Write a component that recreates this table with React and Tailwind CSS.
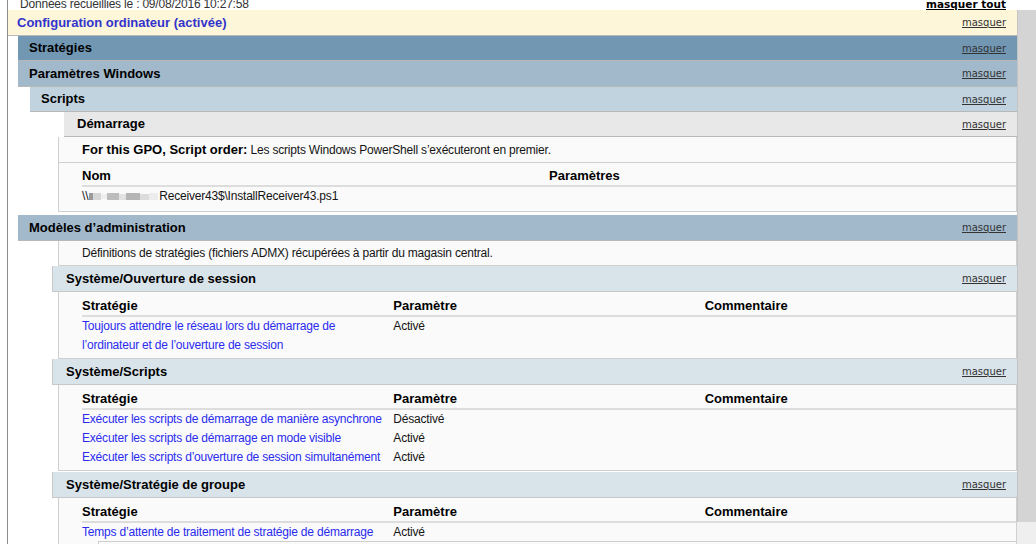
import React from "react";

const body = "text-[12px] tracking-[-0.2px] text-[#141414]";
const link = "text-[#2b2bef]";

function Masquer() {
  return (
    <span className="font-['DejaVu_Sans',Verdana,sans-serif] text-[10px] tracking-normal text-[#333] underline underline-offset-[1px]">
      masquer
    </span>
  );
}

function Head({ className, label, labelClass = "text-black" }) {
  return (
    <div className={`flex items-center justify-between border-b border-[#b8b8b8] pr-[11px] ${className}`}>
      <span className={`text-[13px] font-bold ${labelClass}`}>{label}</span>
      <Masquer />
    </div>
  );
}

function Box({ className, children }) {
  return (
    <div className={`ml-[50px] border-x border-b border-[#d0d0d0] bg-[#fafafa] pl-[23px] ${className}`}>
      {children}
    </div>
  );
}

function PolicyTable({ rows, className = "" }) {
  return (
    <Box className={`pt-[5px] pb-[3px] ${className}`}>
      <div className="grid h-[20px] grid-cols-3 border-b-2 border-[#dddddd] text-[13px] font-bold leading-[18px]">
        <span>Stratégie</span>
        <span>Paramètre</span>
        <span>Commentaire</span>
      </div>
      {rows.map((r, i) => (
        <div key={i} className={`grid grid-cols-3 leading-[19px] ${body}`}>
          <span className={link}>
            {r.name.map((l, j) => (
              <span key={j} className="block whitespace-nowrap">
                {l}
              </span>
            ))}
          </span>
          <span>{r.value}</span>
          <span></span>
        </div>
      ))}
    </Box>
  );
}

function Blur() {
  return (
    <span className="mx-[1px] inline-flex h-[8px] items-center align-middle">
      <span className="h-[7px] w-[4px] bg-[#9a9a9a]" />
      <span className="h-[7px] w-[8px] bg-[#d6d6d6]" />
      <span className="h-[5px] w-[6px] bg-[#eeeeee]" />
      <span className="h-[7px] w-[12px] bg-[#bdbdbd]" />
      <span className="h-[6px] w-[7px] bg-[#e2e2e2]" />
      <span className="h-[7px] w-[14px] bg-[#b5b5b5]" />
      <span className="h-[6px] w-[9px] bg-[#dcdcdc]" />
      <span className="h-[7px] w-[9px] bg-[#ececec]" />
    </span>
  );
}

export default function App() {
  return (
    <div className="flex h-[544px] w-[1036px] overflow-hidden bg-white font-['Liberation_Sans',Arial,sans-serif]">
      <div className="w-[7px] shrink-0" />
      <div className="w-[1010px] shrink-0 border-l border-[#8c8c8c]">
        <div className="flex h-[10px] items-start justify-between pl-[12px] pr-[11px]">
          <span className="-mt-[3px] text-[12px] leading-[14px] tracking-[-0.2px] text-[#333]">
            Données recueillies le : 09/08/2016 10:27:58
          </span>
          <span className="-mt-[3px] font-['DejaVu_Sans',Verdana,sans-serif] text-[10.5px] font-bold leading-[14px] text-black underline">
            masquer tout
          </span>
        </div>

        <Head
          className="h-[26px] bg-[#fdf6d9] pl-[9px]"
          label="Configuration ordinateur (activée)"
          labelClass="text-[#3333cc]"
        />
        <Head className="ml-[10px] h-[25px] bg-[#7197b3] pl-[11px]" label="Stratégies" />
        <Head className="ml-[10px] h-[26px] bg-[#a2b9cb] pl-[11px]" label="Paramètres Windows" />
        <Head className="ml-[22px] h-[25px] bg-[#c1d3df] pl-[11px]" label="Scripts" />
        <Head className="ml-[56px] h-[25px] bg-[#e8e8e8] pl-[13px]" label="Démarrage" />

        <Box className="flex h-[26px] items-center">
          <span className={body}>
            <b className="text-[13px] tracking-normal text-black">For this GPO, Script order:</b> Les scripts Windows PowerShell
            s’exécuteront en premier.
          </span>
        </Box>
        <Box className="pt-[4px] pb-[5px]">
          <div className="grid h-[20px] grid-cols-2 border-b-2 border-[#dddddd] text-[13px] font-bold leading-[18px]">
            <span>Nom</span>
            <span>Paramètres</span>
          </div>
          <div className={`grid grid-cols-2 leading-[19px] ${body}`}>
            <span className="whitespace-nowrap">
              \\
              <Blur />
              Receiver43$\InstallReceiver43.ps1
            </span>
            <span></span>
          </div>
        </Box>

        <Head className="mt-[3px] ml-[10px] h-[26px] bg-[#a2b9cb] pl-[11px]" label="Modèles d’administration" />
        <Box className="flex h-[25px] items-center">
          <span className={body}>Définitions de stratégies (fichiers ADMX) récupérées à partir du magasin central.</span>
        </Box>

        <Head className="ml-[44px] h-[26px] border-l border-[#c8c8c8] bg-[#d9e3ea] pl-[13px]" label="Système/Ouverture de session" />
        <PolicyTable
          rows={[
            {
              name: ["Toujours attendre le réseau lors du démarrage de", "l’ordinateur et de l’ouverture de session"],
              value: "Activé",
            },
          ]}
        />

        <Head className="ml-[44px] h-[26px] border-l border-[#c8c8c8] bg-[#d9e3ea] pl-[13px]" label="Système/Scripts" />
        <PolicyTable
          rows={[
            { name: ["Exécuter les scripts de démarrage de manière asynchrone"], value: "Désactivé" },
            { name: ["Exécuter les scripts de démarrage en mode visible"], value: "Activé" },
            { name: ["Exécuter les scripts d’ouverture de session simultanément"], value: "Activé" },
          ]}
        />

        <Head
          className="mt-[1px] ml-[44px] h-[26px] border-l border-[#c8c8c8] bg-[#d9e3ea] pl-[13px]"
          label="Système/Stratégie de groupe"
        />
        <Box className="pt-[5px]">
          <div className="grid h-[20px] grid-cols-3 border-b-2 border-[#dddddd] text-[13px] font-bold leading-[18px]">
            <span>Stratégie</span>
            <span>Paramètre</span>
            <span>Commentaire</span>
          </div>
          <div className={`grid h-[17px] grid-cols-3 leading-[19px] ${body}`}>
            <span className={`whitespace-nowrap ${link}`}>Temps d’attente de traitement de stratégie de démarrage</span>
            <span>Activé</span>
            <span></span>
          </div>
          <div className="mt-[1px] ml-[16px] h-[20px] border-t border-l border-[#cfcfcf]" />
        </Box>
      </div>
      <div className="flex w-[19px] shrink-0 flex-col">
        <div className="h-[10px] bg-white" />
        <div className="h-[512px] border-l border-[#c4c4c4] bg-[#d4d4d4]" />
        <div className="flex-1 bg-[#efefef]" />
      </div>
    </div>
  );
}
